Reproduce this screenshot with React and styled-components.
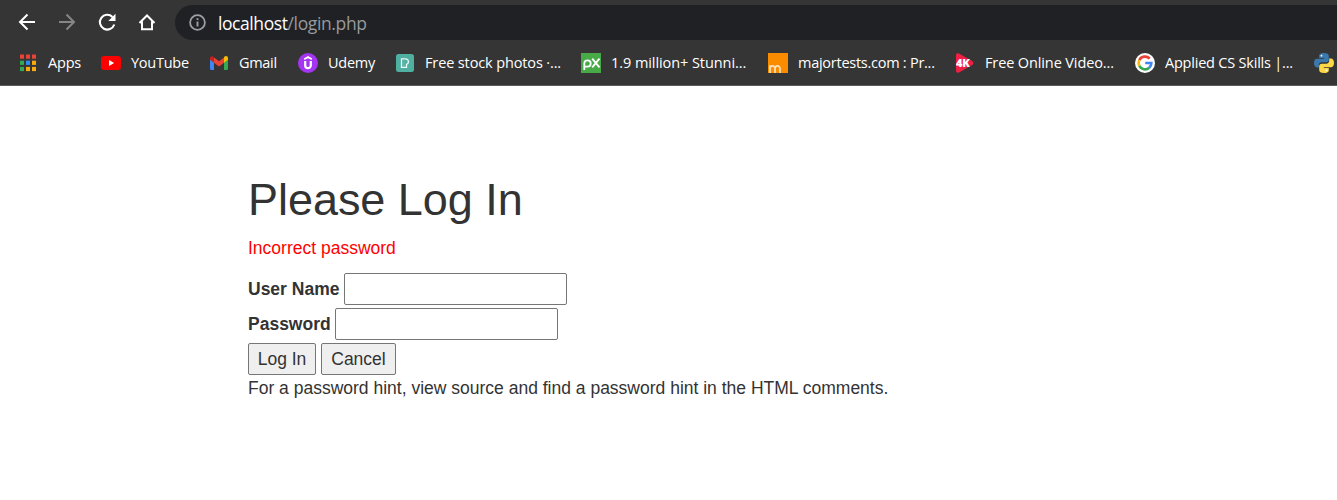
import React from "react";
import styled, { createGlobalStyle } from "styled-components";

const GlobalStyle = createGlobalStyle`
  *, *::before, *::after { box-sizing: border-box; }
  body { margin: 0; background: #fff; overflow: hidden; }
`;

const Chrome = styled.header`
  height: 86px;
  overflow: hidden;
  background: #353535;
  border-bottom: 1px solid #5c5a5c;
  font-family: "Open Sans", "Noto Sans", sans-serif;
`;

const Toolbar = styled.div`
  display: flex;
  align-items: center;
  height: 40px;
  padding: 5px 0 0 15px;
`;

const NavButton = styled.button`
  flex: none;
  display: grid;
  place-items: center;
  width: 24px;
  height: 24px;
  margin: 0 16px 2px 0;
  padding: 0;
  border: 0;
  background: none;
  color: ${(p) => (p.$dim ? "#868686" : "#fff")};
  svg { display: block; }
`;

const AddressBar = styled.div`
  flex: 1;
  display: flex;
  align-items: center;
  gap: 12px;
  height: 35px;
  padding-left: 14px;
  border-radius: 18px 0 0 18px;
  background: #202124;
  svg { flex: none; }
`;

const Url = styled.span`
  font-size: 17.5px;
  line-height: 24px;
  letter-spacing: -0.37px;
  color: #969a9e;
  white-space: nowrap;
`;

const Host = styled.span`
  color: #fff;
  letter-spacing: -0.42px;
`;

const Bookmarks = styled.nav`
  display: flex;
  align-items: center;
  height: 45px;
  padding-left: 18px;
`;

const Bookmark = styled.a`
  flex: none;
  display: flex;
  align-items: center;
  gap: 10px;
  width: ${(p) => p.$width}px;
  svg { flex: none; display: block; }
`;

const BookmarkLabel = styled.span`
  font-size: 14.5px;
  line-height: 20px;
  color: #fff;
  white-space: nowrap;
  letter-spacing: ${(p) => p.$tracking}px;
`;

const Page = styled.main`
  padding: 89px 0 0 248px;
  font-family: "Liberation Sans", Arial, sans-serif;
  font-size: 17.5px;
  line-height: 25px;
  color: #333;
`;

const Title = styled.h1`
  margin: 0 0 11px;
  font-size: 45px;
  font-weight: 400;
  line-height: 50px;
  letter-spacing: -0.04px;
`;

const ErrorText = styled.p`
  margin: 0 0 12px;
  color: #ff0000;
`;

const Row = styled.div`
  display: flex;
  align-items: center;
  gap: 5px;
  height: 32px;
  margin-bottom: 3px;
`;

const Label = styled.label`
  flex: none;
  width: ${(p) => p.$width}px;
  font-weight: 700;
  white-space: nowrap;
`;

const Field = styled.input`
  width: 223px;
  height: 32px;
  padding: 1px 3px;
  border: 1px solid #767676;
  border-radius: 2px;
  background: #fff;
  font: inherit;
  outline: none;
`;

const Actions = styled(Row)`
  margin-bottom: 1px;
`;

const FormButton = styled.button`
  width: ${(p) => p.$width}px;
  height: 32px;
  padding: 0;
  border: 1px solid #767676;
  border-radius: 2px;
  background: #efefef;
  color: #333;
  font: inherit;
  white-space: nowrap;
`;

const Hint = styled.p`
  margin: 0;
  white-space: nowrap;
`;

const Back = () => (
  <svg width="20" height="20" viewBox="0 0 20 20" fill="none" stroke="currentColor" strokeWidth="2">
    <path d="M18 10H3M10.500 2.500 3 10l7.500 7.500" />
  </svg>
);
const Forward = () => (
  <svg width="20" height="20" viewBox="0 0 20 20" fill="none" stroke="currentColor" strokeWidth="2">
    <path d="M2 10h15M9.500 2.500l7.500 7.500-7.500 7.500" />
  </svg>
);
const Reload = () => (
  <svg width="20" height="20" viewBox="0 0 20 20">
    <path d="M17.300 12.500A7.400 7.400 0 1 1 15.500 4.900" fill="none" stroke="currentColor" strokeWidth="2.100" />
    <path d="M18.500 1.700v7.200h-7.200z" fill="currentColor" />
  </svg>
);
const Home = () => (
  <svg width="20" height="20" viewBox="0 0 20 20" fill="none" stroke="currentColor" strokeWidth="2">
    <path d="M2.500 11 10 3.500l7.500 7.500M5 9.500v7.700h10V9.500" />
  </svg>
);
const Info = () => (
  <svg width="17" height="17" viewBox="0 0 17 17" fill="none" stroke="#9aa0a6">
    <circle cx="8.5" cy="8.5" r="7.4" strokeWidth="1.800" />
    <path d="M8.500 7.500v5M8.500 4.300v1.800" strokeWidth="1.900" />
  </svg>
);

const appDots = [
  ["#ea4335", "#ea4335", "#ea4335"],
  ["#34a853", "#2e8cf0", "#fbab10"],
  ["#34a853", "#fbab10", "#fbab10"],
];
const AppsIcon = () => (
  <svg width="20" height="20" viewBox="0 0 20 20">
    {appDots.map((row, y) =>
      row.map((c, x) => <rect key={`${x}${y}`} x={2 + x * 6} y={1.5 + y * 6.2} width="4" height="4.2" fill={c} />)
    )}
  </svg>
);
const YouTubeIcon = () => (
  <svg width="20" height="20" viewBox="0 0 20 20">
    <rect x="0" y="3" width="20" height="14" rx="3.2" fill="#f00" />
    <path d="M8 7v6l5.2-3z" fill="#fff" />
  </svg>
);
const GmailIcon = () => (
  <svg width="20" height="20" viewBox="0 0 20 20">
    <path d="M1 5v10.7c0 .7.6 1.2 1.2 1.2H5V8z" fill="#4285f4" />
    <path d="M15 8v8.9h2.8c.7 0 1.2-.5 1.2-1.2V5z" fill="#34a853" />
    <path d="M15 4.4v5.4l4-3V5.2c0-2-2.2-2.8-3.5-1.6z" fill="#fbbc04" />
    <path d="M5 9.8V4.5l5 3.8 5-3.8v5.3l-5 3.8z" fill="#ea4335" />
    <path d="M1 5.2v1.6l4 3V4.4l-.9-.8C2.8 2.6 1 3.4 1 5.2z" fill="#c5221f" />
  </svg>
);
const UdemyIcon = () => (
  <svg width="20" height="20" viewBox="0 0 20 20">
    <circle cx="10" cy="10" r="10" fill="#a435f0" />
    <path d="M6.2 6.2 10 4l3.8 2.2" fill="none" stroke="#fff" strokeWidth="1.7" />
    <path d="M7.2 8v4.5c0 3.6 5.6 3.6 5.6 0V8" fill="none" stroke="#fff" strokeWidth="2.2" />
  </svg>
);
const PexelsIcon = () => (
  <svg width="20" height="20" viewBox="0 0 20 20">
    <rect x="1" y="1" width="18" height="18" rx="2.5" fill="#4fafa1" />
    <path d="M6.500 5.800h4.500a2.900 2.900 0 0 1 .5 5.600v3H6.500z" fill="none" stroke="#e9f8f5" strokeWidth="1.300" />
    <path d="M9 14V8.500" fill="none" stroke="#7fc4ba" strokeWidth=".6" />
  </svg>
);
const PixabayIcon = () => (
  <svg width="20" height="20" viewBox="0 0 20 20">
    <rect width="20" height="20" fill="#48a947" />
    <path d="M3.300 17v-6.500a3.200 3.200 0 1 1 3.200 3.200H4" fill="none" stroke="#fff" strokeWidth="1.800" />
    <path d="m11.200 5.600 7.300 8.800M18.500 5.600l-7.300 8.800" fill="none" stroke="#fff" strokeWidth="1.900" />
  </svg>
);
const MajorTestsIcon = () => (
  <svg width="20" height="20" viewBox="0 0 20 20">
    <rect width="20" height="20" fill="#fb8c00" />
    <path
      d="M2 20v-7.800M2 15.500c0-3.400 5-3.600 5 0V20M7 15.500c0-3.400 5-3.600 5 0V20"
      fill="none"
      stroke="#fde3bd"
      strokeWidth="1.700"
    />
  </svg>
);
const FourKIcon = () => (
  <svg width="20" height="20" viewBox="0 0 20 20">
    <path d="M1 2.200C1 .5 2.500-.3 4 .6l13.200 7.500c1.600 1 1.600 2.800 0 3.800L4 19.400c-1.500.9-3 0-3-1.600z" fill="#f01f44" />
    <text x="1" y="14" fill="#fff" fontFamily="Open Sans" fontWeight="800" fontSize="11" letterSpacing="-.2">
      4K
    </text>
  </svg>
);
const GoogleIcon = () => (
  <svg width="20" height="20" viewBox="0 0 20 20">
    <circle cx="10" cy="10" r="10" fill="#fff" />
    <g fill="none" strokeWidth="2.700">
      <path d="M14.700 5.600A6.400 6.400 0 0 0 4.300 7.100" stroke="#ea4335" />
      <path d="M4.300 7.100a6.400 6.400 0 0 0 0 5.800" stroke="#fbbc05" />
      <path d="M4.300 12.900a6.400 6.400 0 0 0 9.900 1.900" stroke="#34a853" />
      <path d="M14.200 14.800A6.400 6.400 0 0 0 16.300 10H10.200" stroke="#4285f4" />
    </g>
  </svg>
);
const PythonIcon = () => (
  <svg width="20" height="20" viewBox="0 0 20 20">
    <path
      d="M9.900 0C5.500 0 5.200 1.800 5.200 3v2h5v.8H3.100C1.200 5.800 0 7.300 0 10s1.200 4.400 3 4.400h1.800v-2.200c0-1.700 1.200-2.900 2.900-2.900h4.600c1.500 0 2.500-1.100 2.500-2.500V3c0-1.800-1.500-3-4.900-3z"
      fill="#3b79ad"
    />
    <path
      d="M10.100 20c4.400 0 4.700-1.800 4.700-3v-2h-5v-.8h7.100c1.900 0 3.100-1.500 3.100-4.200s-1.200-4.400-3-4.400h-1.800v2.200c0 1.700-1.200 2.900-2.900 2.900H7.700c-1.500 0-2.500 1.100-2.500 2.500V17c0 1.800 1.500 3 4.900 3z"
      fill="#ffd845"
    />
    <circle cx="7.500" cy="2.700" r=".9" fill="#fff" />
    <circle cx="12.500" cy="17.300" r=".9" fill="#fff" />
  </svg>
);

const bookmarks = [
  { label: "Apps", Icon: AppsIcon, width: 83, tracking: -0.2 },
  { label: "YouTube", Icon: YouTubeIcon, width: 108, tracking: -0.25 },
  { label: "Gmail", Icon: GmailIcon, width: 89, tracking: -0.3 },
  { label: "Udemy", Icon: UdemyIcon, width: 97, tracking: -0.25 },
  { label: "Free stock photos ·...", Icon: PexelsIcon, width: 186, tracking: -0.13 },
  { label: "1.9 million+ Stunni...", Icon: PixabayIcon, width: 187, tracking: -0.07 },
  { label: "majortests.com : Pr...", Icon: MajorTestsIcon, width: 187, tracking: -0.26 },
  { label: "Free Online Video...", Icon: FourKIcon, width: 180, tracking: -0.12 },
  { label: "Applied CS Skills |...", Icon: GoogleIcon, width: 179, tracking: -0.21 },
  { label: "", Icon: PythonIcon, width: 20, tracking: 0 },
];

export default function App() {
  return (
    <>
      <GlobalStyle />
      <Chrome>
        <Toolbar>
          <NavButton><Back /></NavButton>
          <NavButton $dim><Forward /></NavButton>
          <NavButton><Reload /></NavButton>
          <NavButton><Home /></NavButton>
          <AddressBar>
            <Info />
            <Url><Host>localhost</Host>/login.php</Url>
          </AddressBar>
        </Toolbar>
        <Bookmarks>
          {bookmarks.map(({ label, Icon, width, tracking }) => (
            <Bookmark key={label || "python"} $width={width}>
              <Icon />
              {label && <BookmarkLabel $tracking={tracking}>{label}</BookmarkLabel>}
            </Bookmark>
          ))}
        </Bookmarks>
      </Chrome>
      <Page>
        <Title>Please Log In</Title>
        <ErrorText>Incorrect password</ErrorText>
        <Row>
          <Label $width={91} htmlFor="user">User Name</Label>
          <Field id="user" type="text" />
        </Row>
        <Row>
          <Label $width={82} htmlFor="pass">Password</Label>
          <Field id="pass" type="password" />
        </Row>
        <Actions>
          <FormButton $width={68}>Log In</FormButton>
          <FormButton $width={75}>Cancel</FormButton>
        </Actions>
        <Hint>For a password hint, view source and find a password hint in the HTML comments.</Hint>
      </Page>
    </>
  );
}
